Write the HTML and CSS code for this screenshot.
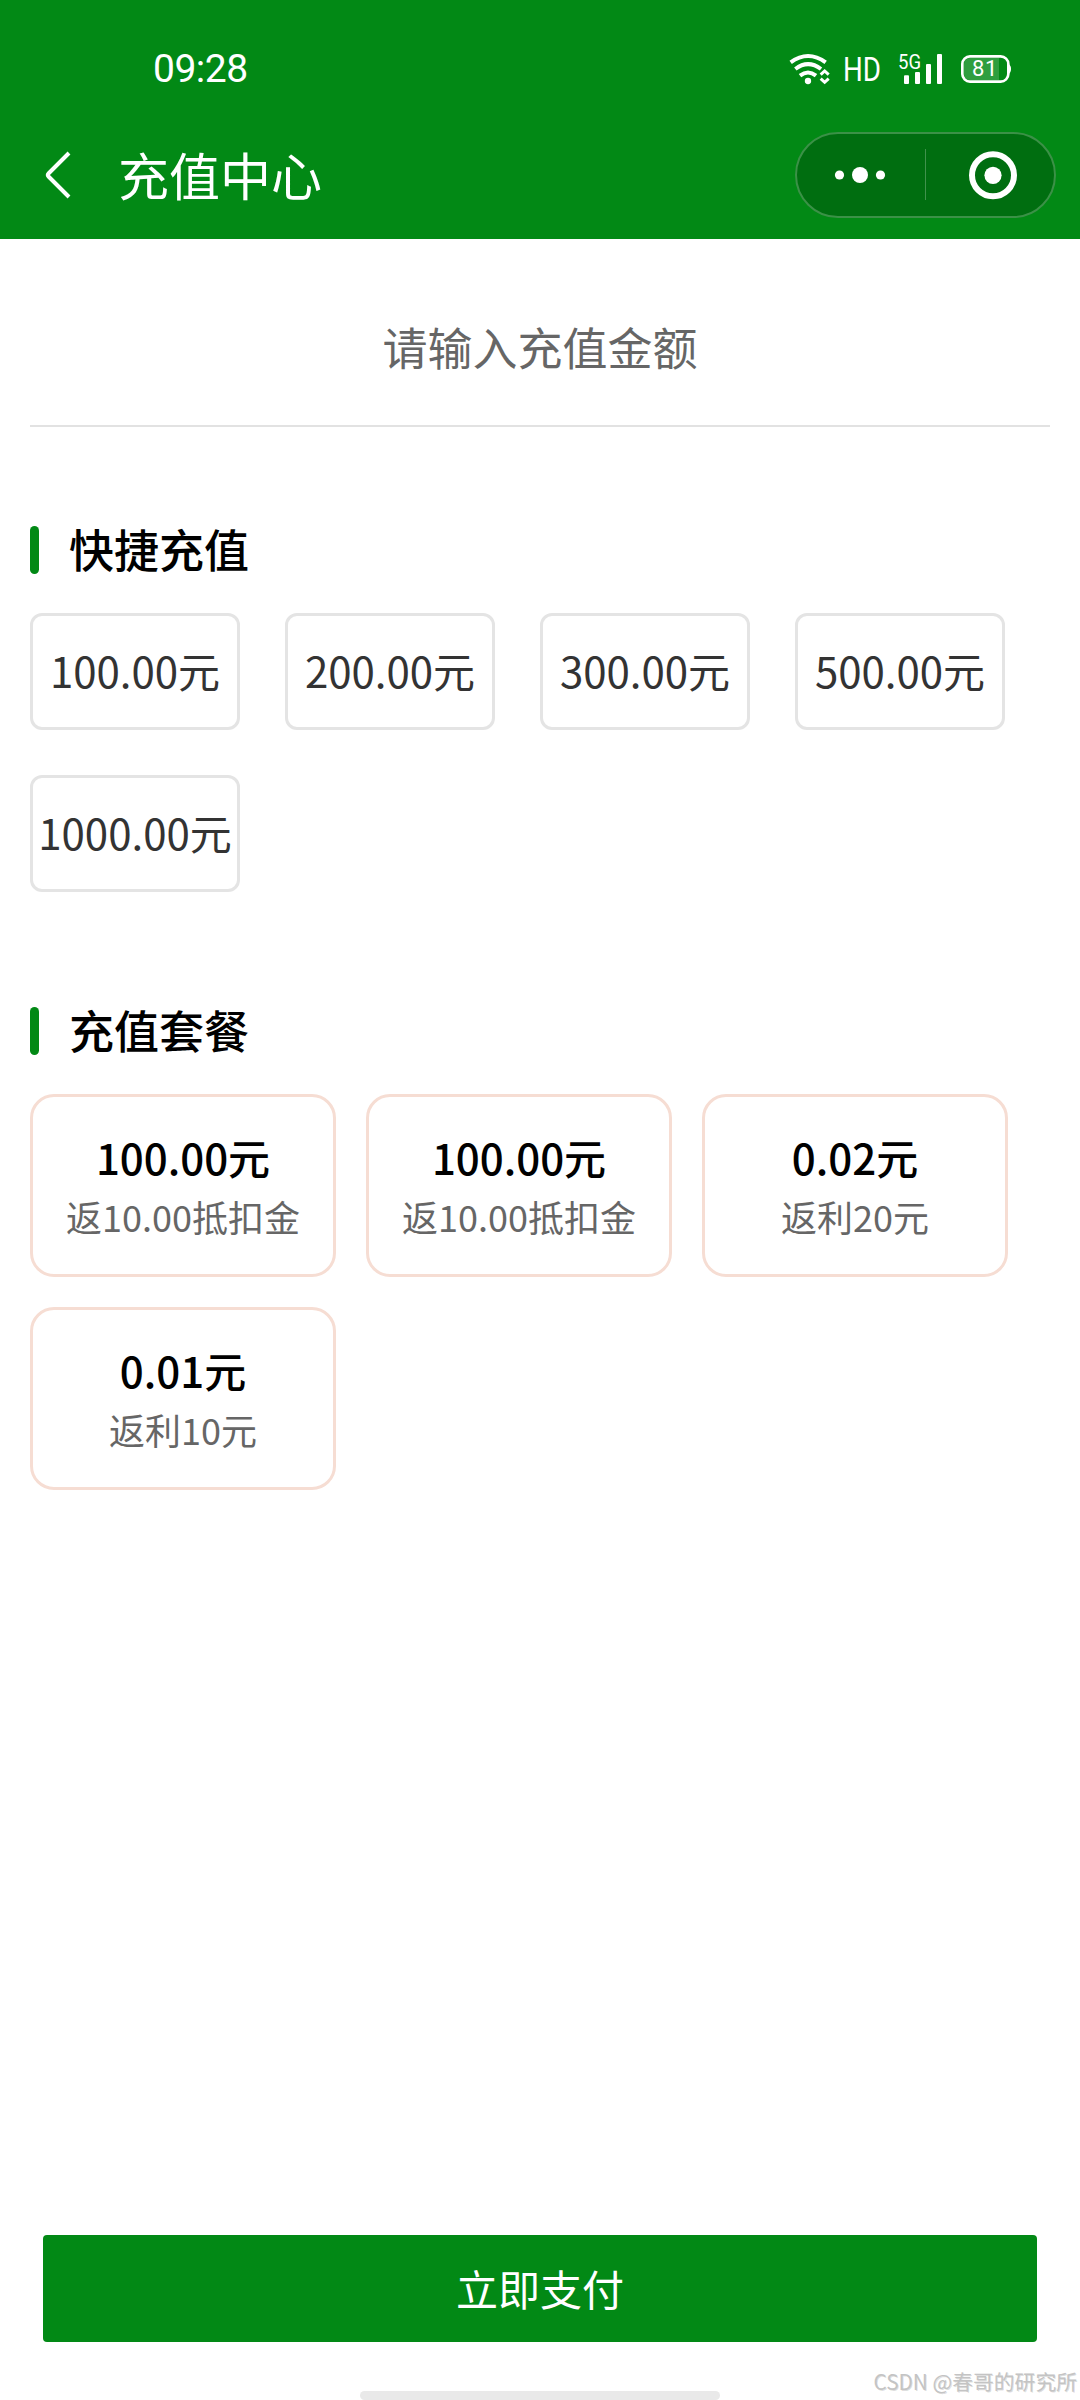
FILE: index.html
```html
<!DOCTYPE html>
<html lang="zh-CN">
<head>
<meta charset="utf-8">
<title>充值中心</title>
<link rel="stylesheet" href="styles.css">
</head>
<body>
<div class="page">
  <header class="header">
    <div class="status">
      <span class="clock">09:28</span>
      <svg class="status-icons" viewBox="45 54 690 120" width="230" height="40">
        <g fill="none" stroke="#fff" stroke-width="12">
          <path d="M62 97Q114 59 167 97"/>
          <path d="M76 117Q114 88 153 117"/>
          <path d="M90 137Q114 118 138 137"/>
          <path stroke-width="9" d="M152 134L164 123L176 134M152 146L164 157L176 146"/>
        </g>
        <circle cx="114" cy="153" r="9.5" fill="#fff"/>
        <text class="icon-text" x="219" y="153" font-size="99" textLength="114" lengthAdjust="spacingAndGlyphs">HD</text>
        <text class="icon-text" x="384" y="116" font-size="60" textLength="69" lengthAdjust="spacingAndGlyphs">5G</text>
        <g fill="#fff">
          <rect x="402" y="136" width="15" height="26" rx="3"/>
          <rect x="435" y="126" width="15" height="36" rx="3"/>
          <rect x="468" y="102" width="15" height="60" rx="3"/>
          <rect x="501" y="72" width="15" height="90" rx="3"/>
          <path d="M716 103Q723 106 723 117Q723 128 716 131Z"/>
        </g>
        <path d="M600 84H687V150H600Q582 150 582 132V102Q582 84 600 84Z" fill="#fff" fill-opacity=".18"/>
        <rect x="577" y="79" width="138" height="76" rx="23" fill="none" stroke="#fff" stroke-width="8"/>
        <text class="icon-text" x="606" y="138" font-size="66" textLength="76">81</text>
      </svg>
    </div>
    <div class="nav">
      <svg class="back" viewBox="0 0 28 48" width="28" height="48"><path d="M25 2L4.5 22.5Q3 24 4.500 25.500L25 46" fill="none" stroke="#fff" stroke-width="4"/></svg>
      <h1 class="title">充值中心</h1>
      <div class="capsule">
        <svg viewBox="0 0 255 80" width="255" height="80">
          <g fill="#fff">
            <circle cx="41.500" cy="40" r="4.600"/>
            <circle cx="62" cy="40" r="8"/>
            <circle cx="82.500" cy="40" r="4.600"/>
            <circle cx="195" cy="40.300" r="8.600"/>
          </g>
          <path d="M127.500 14V65" stroke="#fff" stroke-opacity=".25"/>
          <circle cx="195" cy="40.300" r="21" fill="none" stroke="#fff" stroke-width="6"/>
        </svg>
      </div>
    </div>
  </header>

  <main class="main">
    <input class="amount" type="text" placeholder="请输入充值金额">

    <h2 class="section-title">快捷充值</h2>
    <div class="chips">
      <div class="chip">100.00元</div>
      <div class="chip">200.00元</div>
      <div class="chip">300.00元</div>
      <div class="chip">500.00元</div>
      <div class="chip">1000.00元</div>
    </div>

    <h2 class="section-title">充值套餐</h2>
    <div class="packages">
      <div class="package"><div class="price">100.00元</div><div class="bonus">返10.00抵扣金</div></div>
      <div class="package"><div class="price">100.00元</div><div class="bonus">返10.00抵扣金</div></div>
      <div class="package"><div class="price">0.02元</div><div class="bonus">返利20元</div></div>
      <div class="package"><div class="price">0.01元</div><div class="bonus">返利10元</div></div>
    </div>
  </main>

  <footer class="footer">
    <button class="pay">立即支付</button>
    <div class="home-bar"></div>
  </footer>
  <div class="watermark">CSDN @春哥的研究所</div>
</div>
</body>
</html>
```
FILE: styles.css
```css
* {
  box-sizing: border-box;
}

body {
  margin: 0;
  background: #fff;
  font-family: "Noto Sans CJK SC", sans-serif;
  color: #000;
}

.page {
  position: relative;
  display: flex;
  flex-direction: column;
  width: 1080px;
  height: 2400px;
  overflow: hidden;
}

.header {
  height: 239px;
  background: #028915;
  color: #fff;
}

.status {
  display: flex;
  justify-content: space-between;
  align-items: center;
  height: 132px;
  padding: 4px 65px 0 153px;
}

.clock {
  padding-top: 2px;
  font-family: Roboto, sans-serif;
  font-size: 39px;
  line-height: 40px;
  letter-spacing: -0.5px;
}

.icon-text {
  font-family: Roboto, sans-serif;
  fill: #fff;
}

.nav {
  display: flex;
  align-items: center;
  height: 86px;
  padding: 0 24px 0 44px;
}

.title {
  margin: 0 auto 0 46px;
  padding-bottom: 3px;
  font-size: 51px;
  line-height: 80px;
  font-weight: 400;
}

.capsule {
  width: 261px;
  height: 86px;
  padding: 1px;
  border: 2px solid #3b9147;
  border-radius: 43px;
  background: #006e10;
}

.capsule svg {
  display: block;
}

.main {
  flex: 1;
  padding: 0 30px;
}

.amount {
  display: block;
  width: 100%;
  height: 188px;
  padding: 28px 0 0;
  border: 0;
  border-bottom: 2px solid #e2e2e2;
  outline: 0;
  background: none;
  font: 400 45px "Noto Sans CJK SC", sans-serif;
  text-align: center;
}

.amount::placeholder {
  color: #666;
  opacity: 1;
}

.section-title {
  display: flex;
  align-items: center;
  gap: 30px;
  height: 66px;
  margin: 89px 0 31px;
  font-size: 45px;
  line-height: 66px;
  font-weight: 500;
}

.section-title::before {
  content: "";
  width: 9px;
  height: 48px;
  margin-top: 2px;
  border-radius: 4.5px;
  background: #028915;
}

.chips {
  display: flex;
  flex-wrap: wrap;
  gap: 45px;
  padding-bottom: 16px;
}

.chip {
  width: 210px;
  height: 117px;
  border: 3px solid #e4e4e4;
  border-radius: 12px;
  font-size: 42px;
  line-height: 108px;
  text-align: center;
  color: #333;
  white-space: nowrap;
}

.packages {
  display: flex;
  flex-wrap: wrap;
  gap: 30px;
}

.package {
  width: 306px;
  height: 183px;
  padding-top: 30px;
  border: 3px solid #f6ddd3;
  border-radius: 24px;
  text-align: center;
}

.price {
  font-size: 42px;
  line-height: 60px;
  font-weight: 500;
}

.bonus {
  font-size: 36px;
  line-height: 58px;
  color: #666;
}

.footer {
  display: flex;
  flex-direction: column;
  align-items: center;
  height: 165px;
}

.pay {
  width: 994px;
  height: 107px;
  padding: 0 0 3px;
  border: 0;
  border-radius: 4px;
  background: #028915;
  color: #fff;
  font: 400 42px "Noto Sans CJK SC", sans-serif;
}

.home-bar {
  width: 360px;
  height: 9px;
  margin-top: auto;
  border-radius: 5px;
  background: #e9e9e9;
}

.watermark {
  position: absolute;
  right: 3px;
  bottom: 3px;
  font-size: 20.8px;
  line-height: 32px;
  color: #c4c4c4;
  text-shadow: 1px 1px 0 rgba(0, 0, 0, 0.12);
  white-space: nowrap;
}
```
